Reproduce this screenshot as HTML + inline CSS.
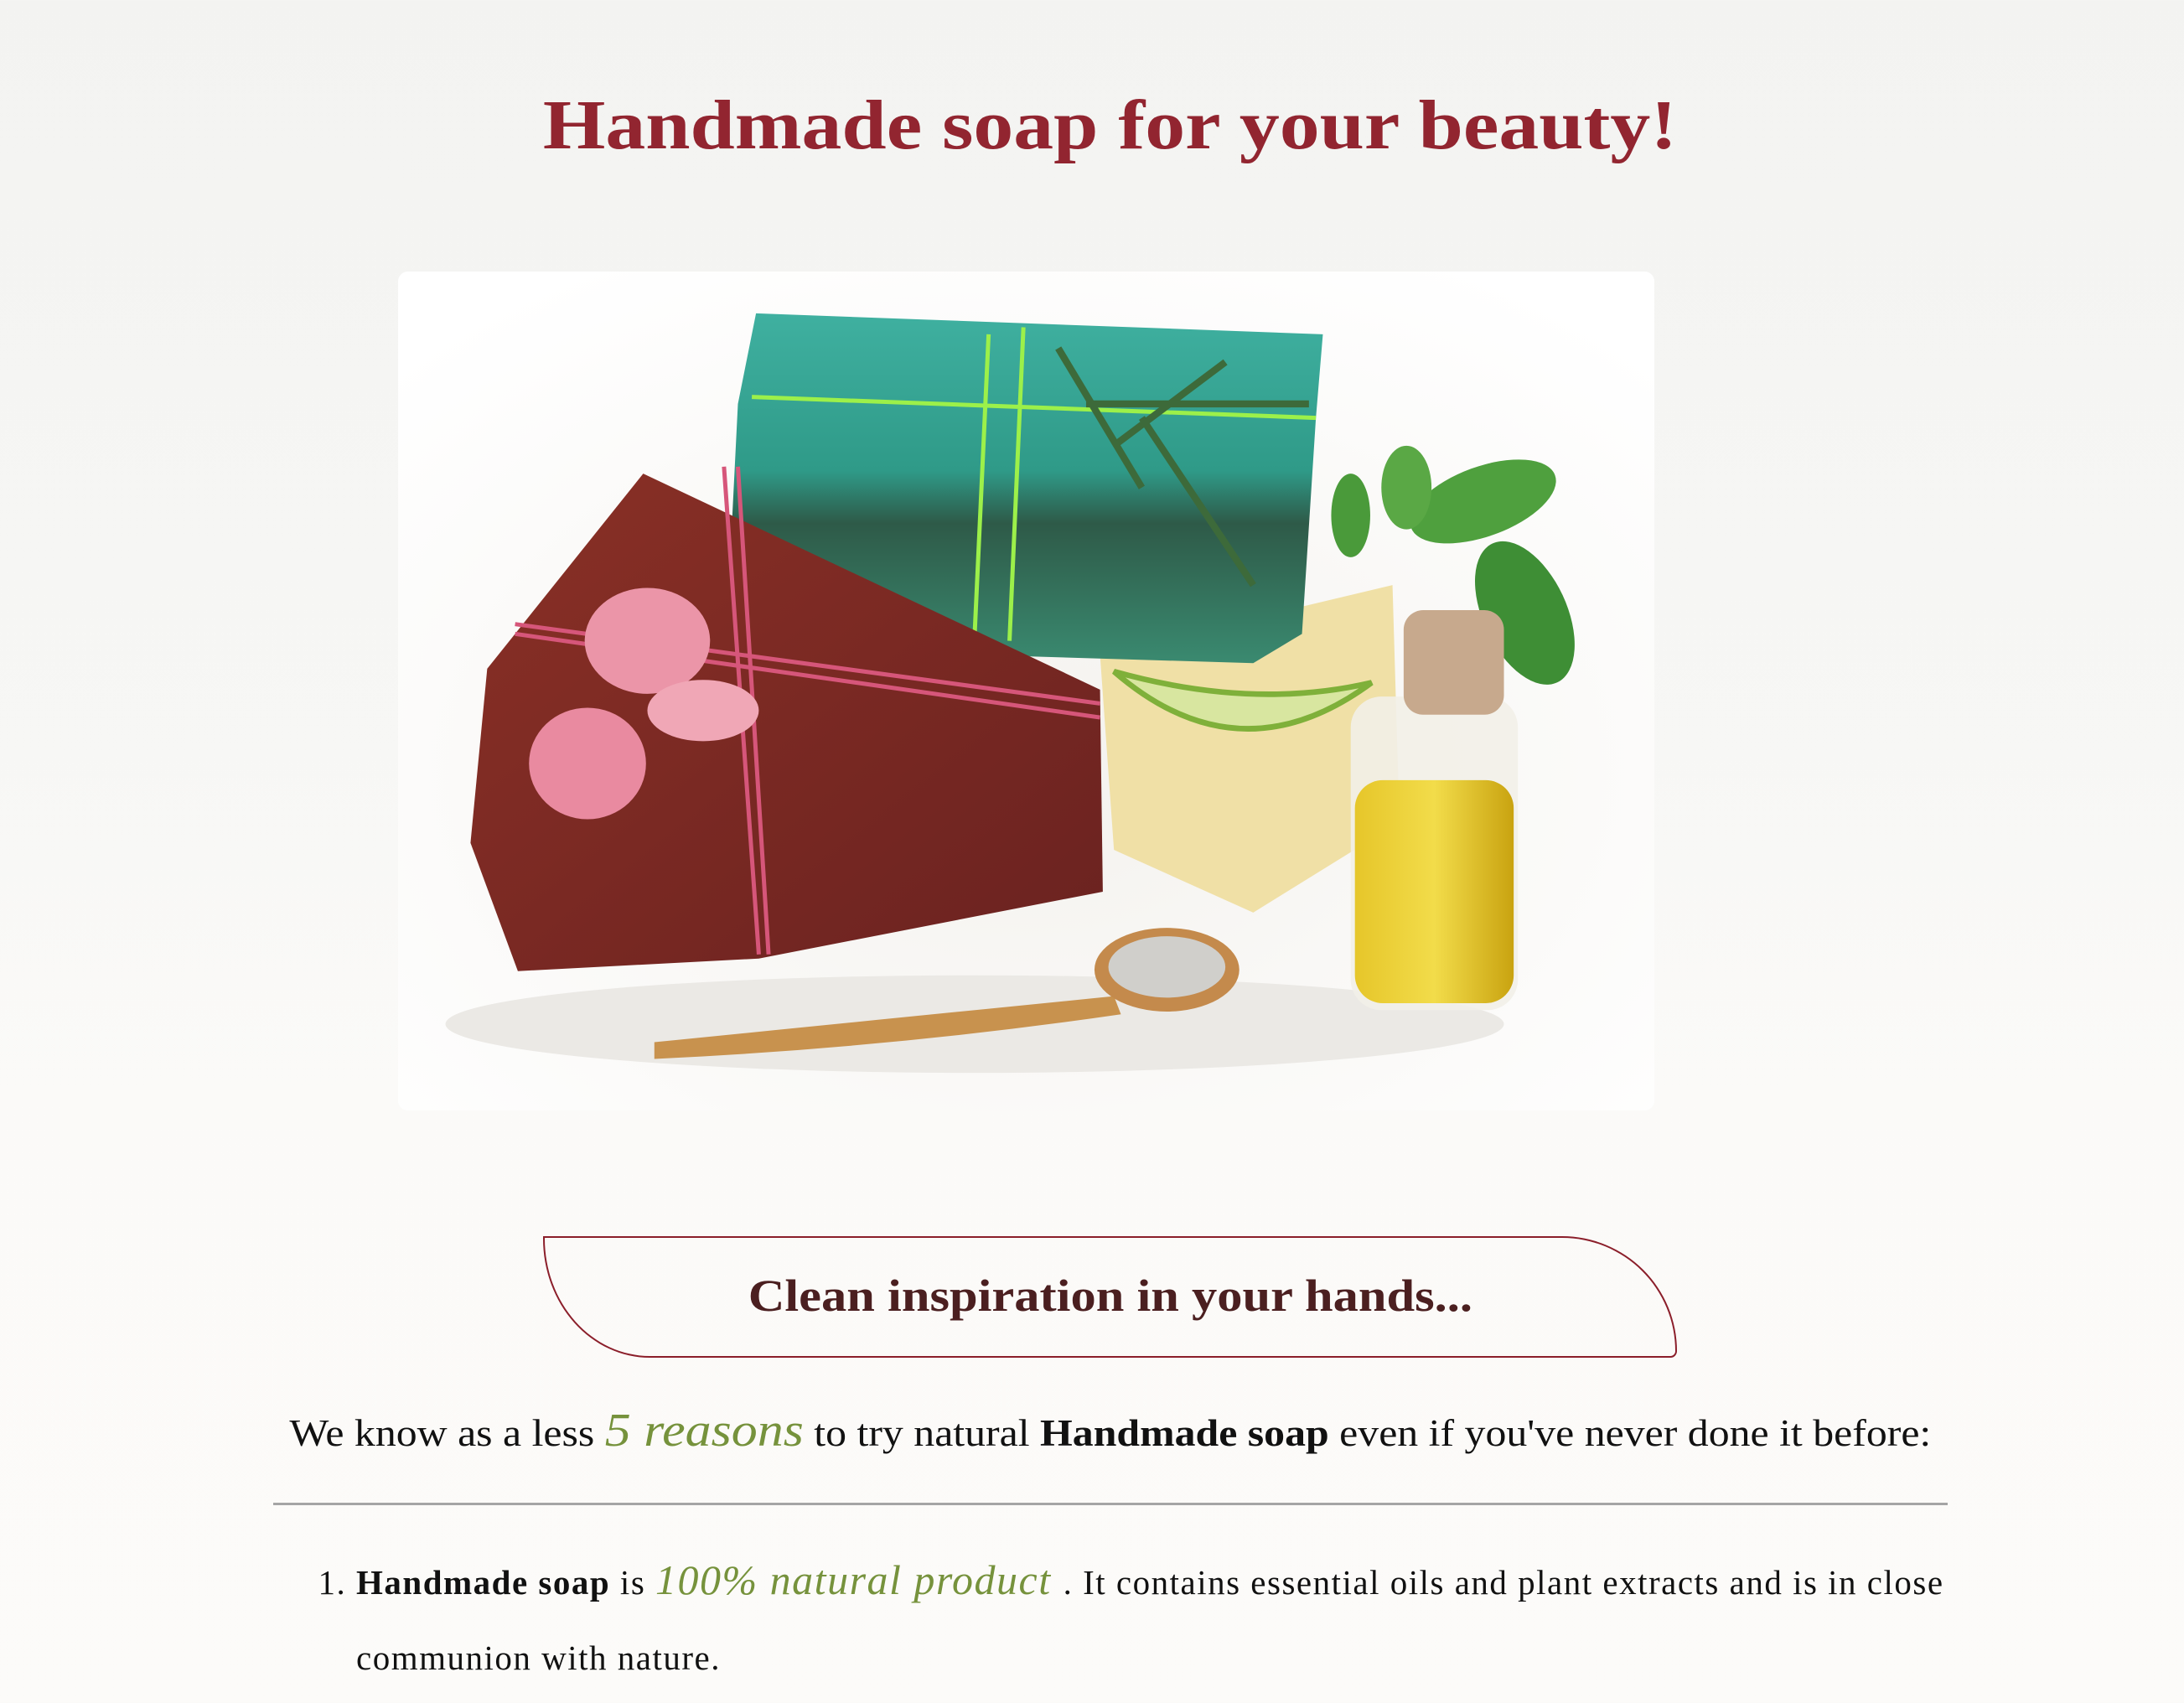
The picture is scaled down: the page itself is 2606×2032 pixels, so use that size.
<!DOCTYPE html>
<html><head><meta charset="utf-8"><style>
html,body{margin:0;padding:0}
body{width:2606px;height:2032px;overflow:hidden;background:linear-gradient(#f3f3f1 0,#f7f7f5 900px,#fbfaf8 1300px,#fcfbf9 2032px);font-family:"Liberation Serif",serif;position:relative}
h1{position:absolute;left:22px;width:2606px;top:100px;margin:0;text-align:center;font-size:84px;line-height:100px;color:#922530;font-weight:bold}
h1 span{display:inline-block;transform:scaleX(1.14)}
.img{position:absolute;left:475px;top:324px;width:1499px;height:1001px;border-radius:12px;overflow:hidden;background:#fff}
.box{position:absolute;left:648px;top:1475px;width:1353px;height:145px;border:2px solid #8b1e2a;border-radius:0 140px 8px 130px/0 140px 8px 145px;box-sizing:border-box}
.box div{text-align:center;font-weight:bold;font-size:54px;line-height:138px;color:#4b1f20}
.box span{display:inline-block;transform:scaleX(1.12)}
.p{position:absolute;left:22px;width:2606px;top:1677px;text-align:center;font-size:45px;line-height:60px;color:#111}
.p>span{display:inline-block;transform:scaleX(1.107)}
.g{color:#76923c;font-style:italic;font-size:56px}
hr{position:absolute;left:326px;width:1998px;top:1793px;margin:0;border:0;border-top:3px solid #a5a5a5}
ol{position:absolute;left:425px;top:1840px;width:1910px;margin:0;padding:0;font-size:41px;line-height:90px;color:#111;letter-spacing:1.5px}
.g2{color:#76923c;font-style:italic;font-size:50px}
</style></head><body>
<h1><span>Handmade soap for your beauty!</span></h1>
<div class="img">
<svg width="1499" height="1001" viewBox="286 195 902 602" preserveAspectRatio="none">
<defs>
<radialGradient id="bg" cx="0.5" cy="0.6" r="0.7"><stop offset="0" stop-color="#f4f2ee"/><stop offset="1" stop-color="#fff"/></radialGradient>
<linearGradient id="gs" x1="0" y1="0" x2="0" y2="1"><stop offset="0" stop-color="#3fb0a0"/><stop offset="0.45" stop-color="#2f9a88"/><stop offset="0.6" stop-color="#2e5a48"/><stop offset="1" stop-color="#3a8a70"/></linearGradient>
<linearGradient id="rs" x1="0" y1="0" x2="1" y2="1"><stop offset="0" stop-color="#8a3026"/><stop offset="1" stop-color="#6a2220"/></linearGradient>
<linearGradient id="oil" x1="0" y1="0" x2="1" y2="0"><stop offset="0" stop-color="#e6c62a"/><stop offset="0.5" stop-color="#f2dc4a"/><stop offset="1" stop-color="#c9a310"/></linearGradient>
</defs>
<rect x="286" y="195" width="902" height="602" fill="url(#bg)"/>
<ellipse cx="700" cy="735" rx="380" ry="35" fill="#ebe9e5"/>
<polygon points="790,470 1000,420 1005,590 900,655 800,610" fill="#f0e0a6"/>
<polygon points="543,225 950,240 945,300 935,455 900,476 700,470 525,390 530,290" fill="url(#gs)"/>
<path d="M540,285 L945,300 M710,240 L700,455 M735,235 L725,460" stroke="#9cf04a" stroke-width="3" fill="none"/>
<path d="M760,250 L820,350 M780,290 L940,290 M820,300 L900,420 M800,320 L880,260" stroke="#3d6a3a" stroke-width="5" fill="none"/>
<polygon points="462,340 790,495 792,640 545,688 372,697 338,605 350,480" fill="url(#rs)"/>
<path d="M520,335 L545,685 M530,335 L552,685 M370,448 L790,505 M370,455 L790,515" stroke="#d6567a" stroke-width="3" fill="none"/>
<ellipse cx="465" cy="460" rx="45" ry="38" fill="#eb95a8"/>
<ellipse cx="422" cy="548" rx="42" ry="40" fill="#e98aa0"/>
<ellipse cx="505" cy="510" rx="40" ry="22" fill="#f0a7b6"/>
<path d="M800,482 Q890,560 985,490 Q900,510 800,482 Z" fill="#d8e6a0" stroke="#7fb03a" stroke-width="4"/>
<ellipse cx="1065" cy="360" rx="55" ry="25" fill="#4fa03e" transform="rotate(-20 1065 360)"/>
<ellipse cx="1095" cy="440" rx="30" ry="55" fill="#3e8e35" transform="rotate(-25 1095 440)"/>
<ellipse cx="1010" cy="350" rx="18" ry="30" fill="#5aa845"/>
<ellipse cx="970" cy="370" rx="14" ry="30" fill="#4a9a3a"/>
<rect x="970" y="500" width="120" height="225" rx="22" fill="#f2f0e8" opacity="0.9"/>
<rect x="973" y="560" width="114" height="160" rx="20" fill="url(#oil)"/>
<rect x="1008" y="438" width="72" height="75" rx="14" fill="#c7a98d"/>
<path d="M470,748 Q600,735 800,715 L805,728 Q640,752 470,760 Z" fill="#c8924e"/>
<ellipse cx="838" cy="696" rx="52" ry="30" fill="#c48a4c"/>
<ellipse cx="838" cy="694" rx="42" ry="22" fill="#d0cfcb"/>
</svg>
</div>
<div class="box"><div><span>Clean inspiration in your hands...</span></div></div>
<div class="p"><span>We know as a less <span class="g">5 reasons</span> to try natural <b>Handmade soap</b> even if you've never done it before:</span></div>
<hr>
<ol><li><b>Handmade soap</b> is <span class="g2">100% natural product </span>. It contains essential oils and plant extracts and is in close communion with nature.</li></ol>
</body></html>
